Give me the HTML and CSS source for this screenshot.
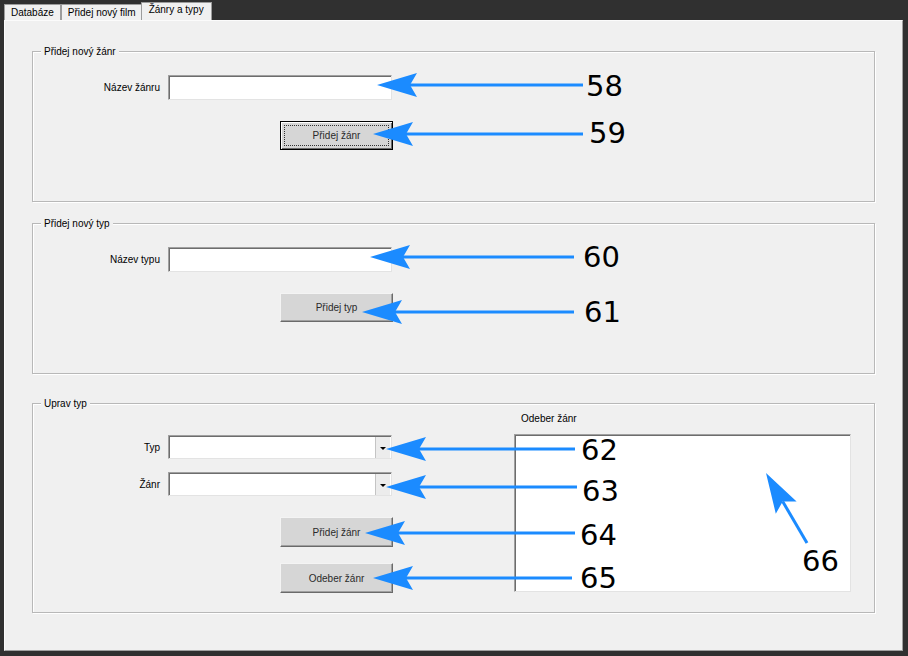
FILE: index.html
```html
<!DOCTYPE html>
<html lang="cs">
<head>
<meta charset="utf-8">
<title>Žánry a typy</title>
<link rel="stylesheet" href="styles.css">
</head>
<body>
<div class="window">
  <div class="tabs">
    <div class="tab">Databáze</div>
    <div class="tab">Přidej nový film</div>
    <div class="tab active">Žánry a typy</div>
  </div>
  <div class="panel">
    <section class="group g1">
      <div class="group-title">Přidej nový žánr</div>
      <div class="form">
        <label class="lbl">Název žánru</label>
        <div class="textbox"></div>
        <div class="btn focused"><span class="focus-ring">Přidej žánr</span></div>
      </div>
    </section>
    <section class="group g2">
      <div class="group-title">Přidej nový typ</div>
      <div class="form">
        <label class="lbl">Název typu</label>
        <div class="textbox"></div>
        <div class="btn">Přidej typ</div>
      </div>
    </section>
    <section class="group g3">
      <div class="group-title">Uprav typ</div>
      <div class="g3-body">
        <div class="form form-edit">
          <label class="lbl">Typ</label>
          <div class="combo"><span class="drop"><i class="tri"></i></span></div>
          <label class="lbl lbl-2">Žánr</label>
          <div class="combo combo-2"><span class="drop"><i class="tri"></i></span></div>
          <div class="btn btn-3">Přidej žánr</div>
          <div class="btn btn-4">Odeber žánr</div>
        </div>
        <div class="list-col">
          <div class="list-label">Odeber žánr</div>
          <div class="listbox"></div>
        </div>
      </div>
    </section>
  </div>
</div>

<svg class="annotations" width="908" height="656" viewBox="0 0 908 656" xmlns="http://www.w3.org/2000/svg">
  <g class="arrows">
    <line x1="410" y1="85" x2="583" y2="85"/>
    <polygon points="377,85 417,73 410,85 417,97"/>
    <line x1="406" y1="134" x2="583" y2="134"/>
    <polygon points="373,134 413,122 406,134 413,146"/>
    <line x1="403" y1="257" x2="574" y2="257"/>
    <polygon points="370,257 410,245 403,257 410,269"/>
    <line x1="395" y1="312" x2="574" y2="312"/>
    <polygon points="362,312 402,300 395,312 402,324"/>
    <line x1="419" y1="449" x2="575" y2="449"/>
    <polygon points="386,449 426,437 419,449 426,461"/>
    <line x1="419" y1="487" x2="577" y2="487"/>
    <polygon points="386,487 426,475 419,487 426,499"/>
    <line x1="398" y1="533" x2="575" y2="533"/>
    <polygon points="365,533 405,521 398,533 405,545"/>
    <line x1="406" y1="578" x2="572" y2="578"/>
    <polygon points="373,578 413,566 406,578 413,590"/>
    <line x1="782.7" y1="501.5" x2="807" y2="543"/>
    <polygon points="766,473 796.6,501.5 782.7,501.5 775.8,513.7"/>
  </g>
  <g class="nums">
    <text x="586" y="96">58</text>
    <text x="589" y="143">59</text>
    <text x="583" y="267">60</text>
    <text x="584" y="322">61</text>
    <text x="581" y="460">62</text>
    <text x="582" y="501">63</text>
    <text x="580" y="545">64</text>
    <text x="580" y="588">65</text>
    <text x="802" y="571">66</text>
  </g>
</svg>
</body>
</html>
```

FILE: styles.css
```css
html, body {
  margin: 0;
  padding: 0;
}

body {
  width: 908px;
  height: 656px;
  overflow: hidden;
  position: relative;
  background: #303030;
  font-family: "Liberation Sans", Arial, sans-serif;
  font-size: 10px;
  color: #000;
}

.window {
  padding: 2px 5px 0 4px;
}

/* tabs */
.tabs {
  display: flex;
  align-items: flex-end;
  height: 18px;
}

.tab {
  box-sizing: border-box;
  height: 16px;
  line-height: 15px;
  padding: 0 6px;
  background: #f0f0f0;
  border: 1px solid #9c9c9c;
  border-bottom: none;
  color: #000;
  white-space: nowrap;
}

.tab.active {
  height: 18px;
  line-height: 14px;
  padding: 0 7px;
  margin-left: -2px;
}

/* panel */
.panel {
  box-sizing: border-box;
  height: 631px;
  background: #f0f0f0;
  border: 1px solid;
  border-color: #fbfbfb #a0a0a0 #a0a0a0 #fbfbfb;
  padding: 30px 27px 0 27px;
}

/* group boxes */
.group {
  box-sizing: border-box;
  border: 1px solid #b8b8b8;
  box-shadow: 1px 1px 0 #fff, inset 1px 1px 0 #fff;
}

.g1, .g2 {
  height: 151px;
}

.g2 {
  margin-top: 21px;
}

.g3 {
  margin-top: 29px;
  height: 210px;
}

.group-title {
  width: max-content;
  margin: -7px 0 -6px 8px;
  padding: 0 3px;
  line-height: 13px;
  background: #f0f0f0;
}

/* forms */
.form {
  display: grid;
  grid-template-columns: 127px 224px;
  column-gap: 8px;
  row-gap: 21px;
  padding-top: 23px;
}

.lbl {
  align-self: center;
  text-align: right;
  white-space: nowrap;
}

.textbox {
  box-sizing: border-box;
  height: 25px;
  background: #fff;
  border: 1px solid;
  border-color: #a0a0a0 #e3e3e3 #e3e3e3 #a0a0a0;
  box-shadow: inset 1px 1px 0 #6d6d6d;
}

.btn {
  grid-column: 2;
  box-sizing: border-box;
  width: 113px;
  height: 29px;
  margin-left: 112px;
  display: flex;
  align-items: center;
  justify-content: center;
  background: #d6d6d6;
  color: #2a2a2a;
  border: 1px solid;
  border-color: #f4f4f4 #6a6a6a #6a6a6a #f4f4f4;
  box-shadow: inset -1px -1px 0 #a0a0a0;
}

.btn.focused {
  border-color: #000;
  box-shadow: inset 1px 1px 0 #fff, inset -1px -1px 0 #6a6a6a;
}

.focus-ring {
  flex: 1;
  align-self: stretch;
  margin: 3px;
  border: 1px dotted #333;
  display: flex;
  align-items: center;
  justify-content: center;
}

/* edit group */
.g3-body {
  display: flex;
  align-items: flex-start;
}

.form-edit {
  row-gap: 0;
  padding-top: 31px;
}

.combo {
  box-sizing: border-box;
  height: 24px;
  background: #fff;
  border: 1px solid;
  border-color: #a0a0a0 #e3e3e3 #e3e3e3 #a0a0a0;
  box-shadow: inset 1px 1px 0 #6d6d6d;
  display: flex;
  justify-content: flex-end;
  padding: 1px 1px 0 0;
}

.lbl-2, .combo-2 {
  margin-top: 13px;
}

.drop {
  box-sizing: border-box;
  width: 15px;
  height: 21px;
  background: #ececec;
  border-left: 1px solid #c4c4c4;
  display: flex;
  align-items: center;
  justify-content: center;
}

.tri {
  width: 0;
  height: 0;
  border-left: 3px solid transparent;
  border-right: 3px solid transparent;
  border-top: 3px solid #000;
  margin-top: 1px;
}

.btn-3 {
  margin-top: 21px;
  height: 30px;
}

.btn-4 {
  margin-top: 16px;
  height: 30px;
}

.list-col {
  margin-left: 122px;
  padding-top: 8px;
}

.list-label {
  line-height: 13px;
  padding-left: 7px;
}

.listbox {
  box-sizing: border-box;
  margin-top: 9px;
  width: 337px;
  height: 158px;
  background: #fff;
  border: 1px solid;
  border-color: #a0a0a0 #e3e3e3 #e3e3e3 #a0a0a0;
  box-shadow: inset 1px 1px 0 #6d6d6d;
}

/* annotations overlay */
.annotations {
  position: absolute;
  top: 0;
  left: 0;
  pointer-events: none;
}

.arrows line {
  stroke: #1b8bff;
  stroke-width: 3;
}

.arrows polygon {
  fill: #1b8bff;
}

.nums text {
  font-family: "DejaVu Sans", sans-serif;
  font-size: 29px;
  fill: #000;
}
```
